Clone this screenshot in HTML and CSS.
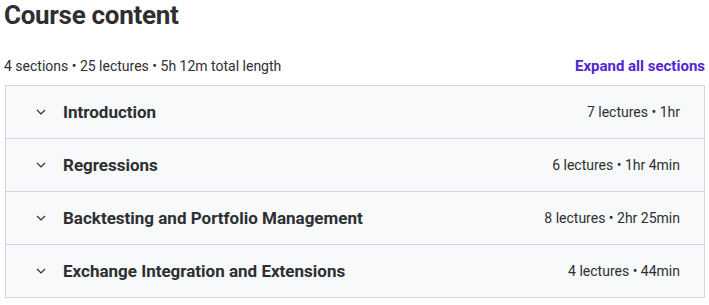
FILE: index.html
```html
<!DOCTYPE html>
<html lang="en">
<head>
    <meta charset="UTF-8">
    <title>Course content</title>
    <link rel="stylesheet" href="styles.css">
</head>
<body>
    <div class="course-content">
        <h2 class="heading">Course content</h2>
        <div class="summary">
            <span>4 sections • 25 lectures • 5h 12m total length</span>
            <button class="expand-all">Expand all sections</button>
        </div>
        <div class="sections">
            <div class="section">
                <svg class="chevron" viewBox="0 0 10 6"><path d="M1 1l4 4 4-4" /></svg>
                <span class="section-title">Introduction</span>
                <span class="section-meta">7 lectures • 1hr</span>
            </div>
            <div class="section">
                <svg class="chevron" viewBox="0 0 10 6"><path d="M1 1l4 4 4-4" /></svg>
                <span class="section-title">Regressions</span>
                <span class="section-meta">6 lectures • 1hr 4min</span>
            </div>
            <div class="section">
                <svg class="chevron" viewBox="0 0 10 6"><path d="M1 1l4 4 4-4" /></svg>
                <span class="section-title">Backtesting and Portfolio Management</span>
                <span class="section-meta">8 lectures • 2hr 25min</span>
            </div>
            <div class="section">
                <svg class="chevron" viewBox="0 0 10 6"><path d="M1 1l4 4 4-4" /></svg>
                <span class="section-title">Exchange Integration and Extensions</span>
                <span class="section-meta">4 lectures • 44min</span>
            </div>
        </div>
    </div>
</body>
</html>
```
FILE: styles.css
```css
body {
    margin: 0;
    font-family: 'Roboto', 'Liberation Sans', sans-serif;
    color: #2d2f31;
    background: #fff;
}

.course-content {
    width: 700px;
    padding: 0 0 0 5px;
}

.heading {
    margin: 0;
    padding-top: 1px;
    margin-left: -1px;
    font-size: 26px;
    line-height: 28px;
    font-weight: 700;
    letter-spacing: -0.3px;
}

.summary {
    display: flex;
    justify-content: space-between;
    align-items: center;
    margin-top: 25px;
    height: 24px;
    font-size: 14px;
    margin-left: -1px;
}

.expand-all {
    border: none;
    background: none;
    padding: 0;
    font-family: inherit;
    font-size: 15px;
    font-weight: 700;
    color: #5624d0;
    cursor: pointer;
}

.sections {
    margin-top: 7px;
    border: 1px solid #d1d7dc;
    border-bottom: none;
}

.section {
    display: flex;
    align-items: center;
    height: 52px;
    padding: 0 24px 0 30px;
    background: #f7f9fa;
    border-bottom: 1px solid #d1d7dc;
}

.chevron {
    width: 10px;
    height: 6px;
    fill: none;
    stroke: #2d2f31;
    stroke-width: 1.2;
    margin-right: 17px;
}

.section-title {
    flex: 1;
    font-size: 17px;
    font-weight: 700;
}

.section-meta {
    font-size: 14px;
}
```
